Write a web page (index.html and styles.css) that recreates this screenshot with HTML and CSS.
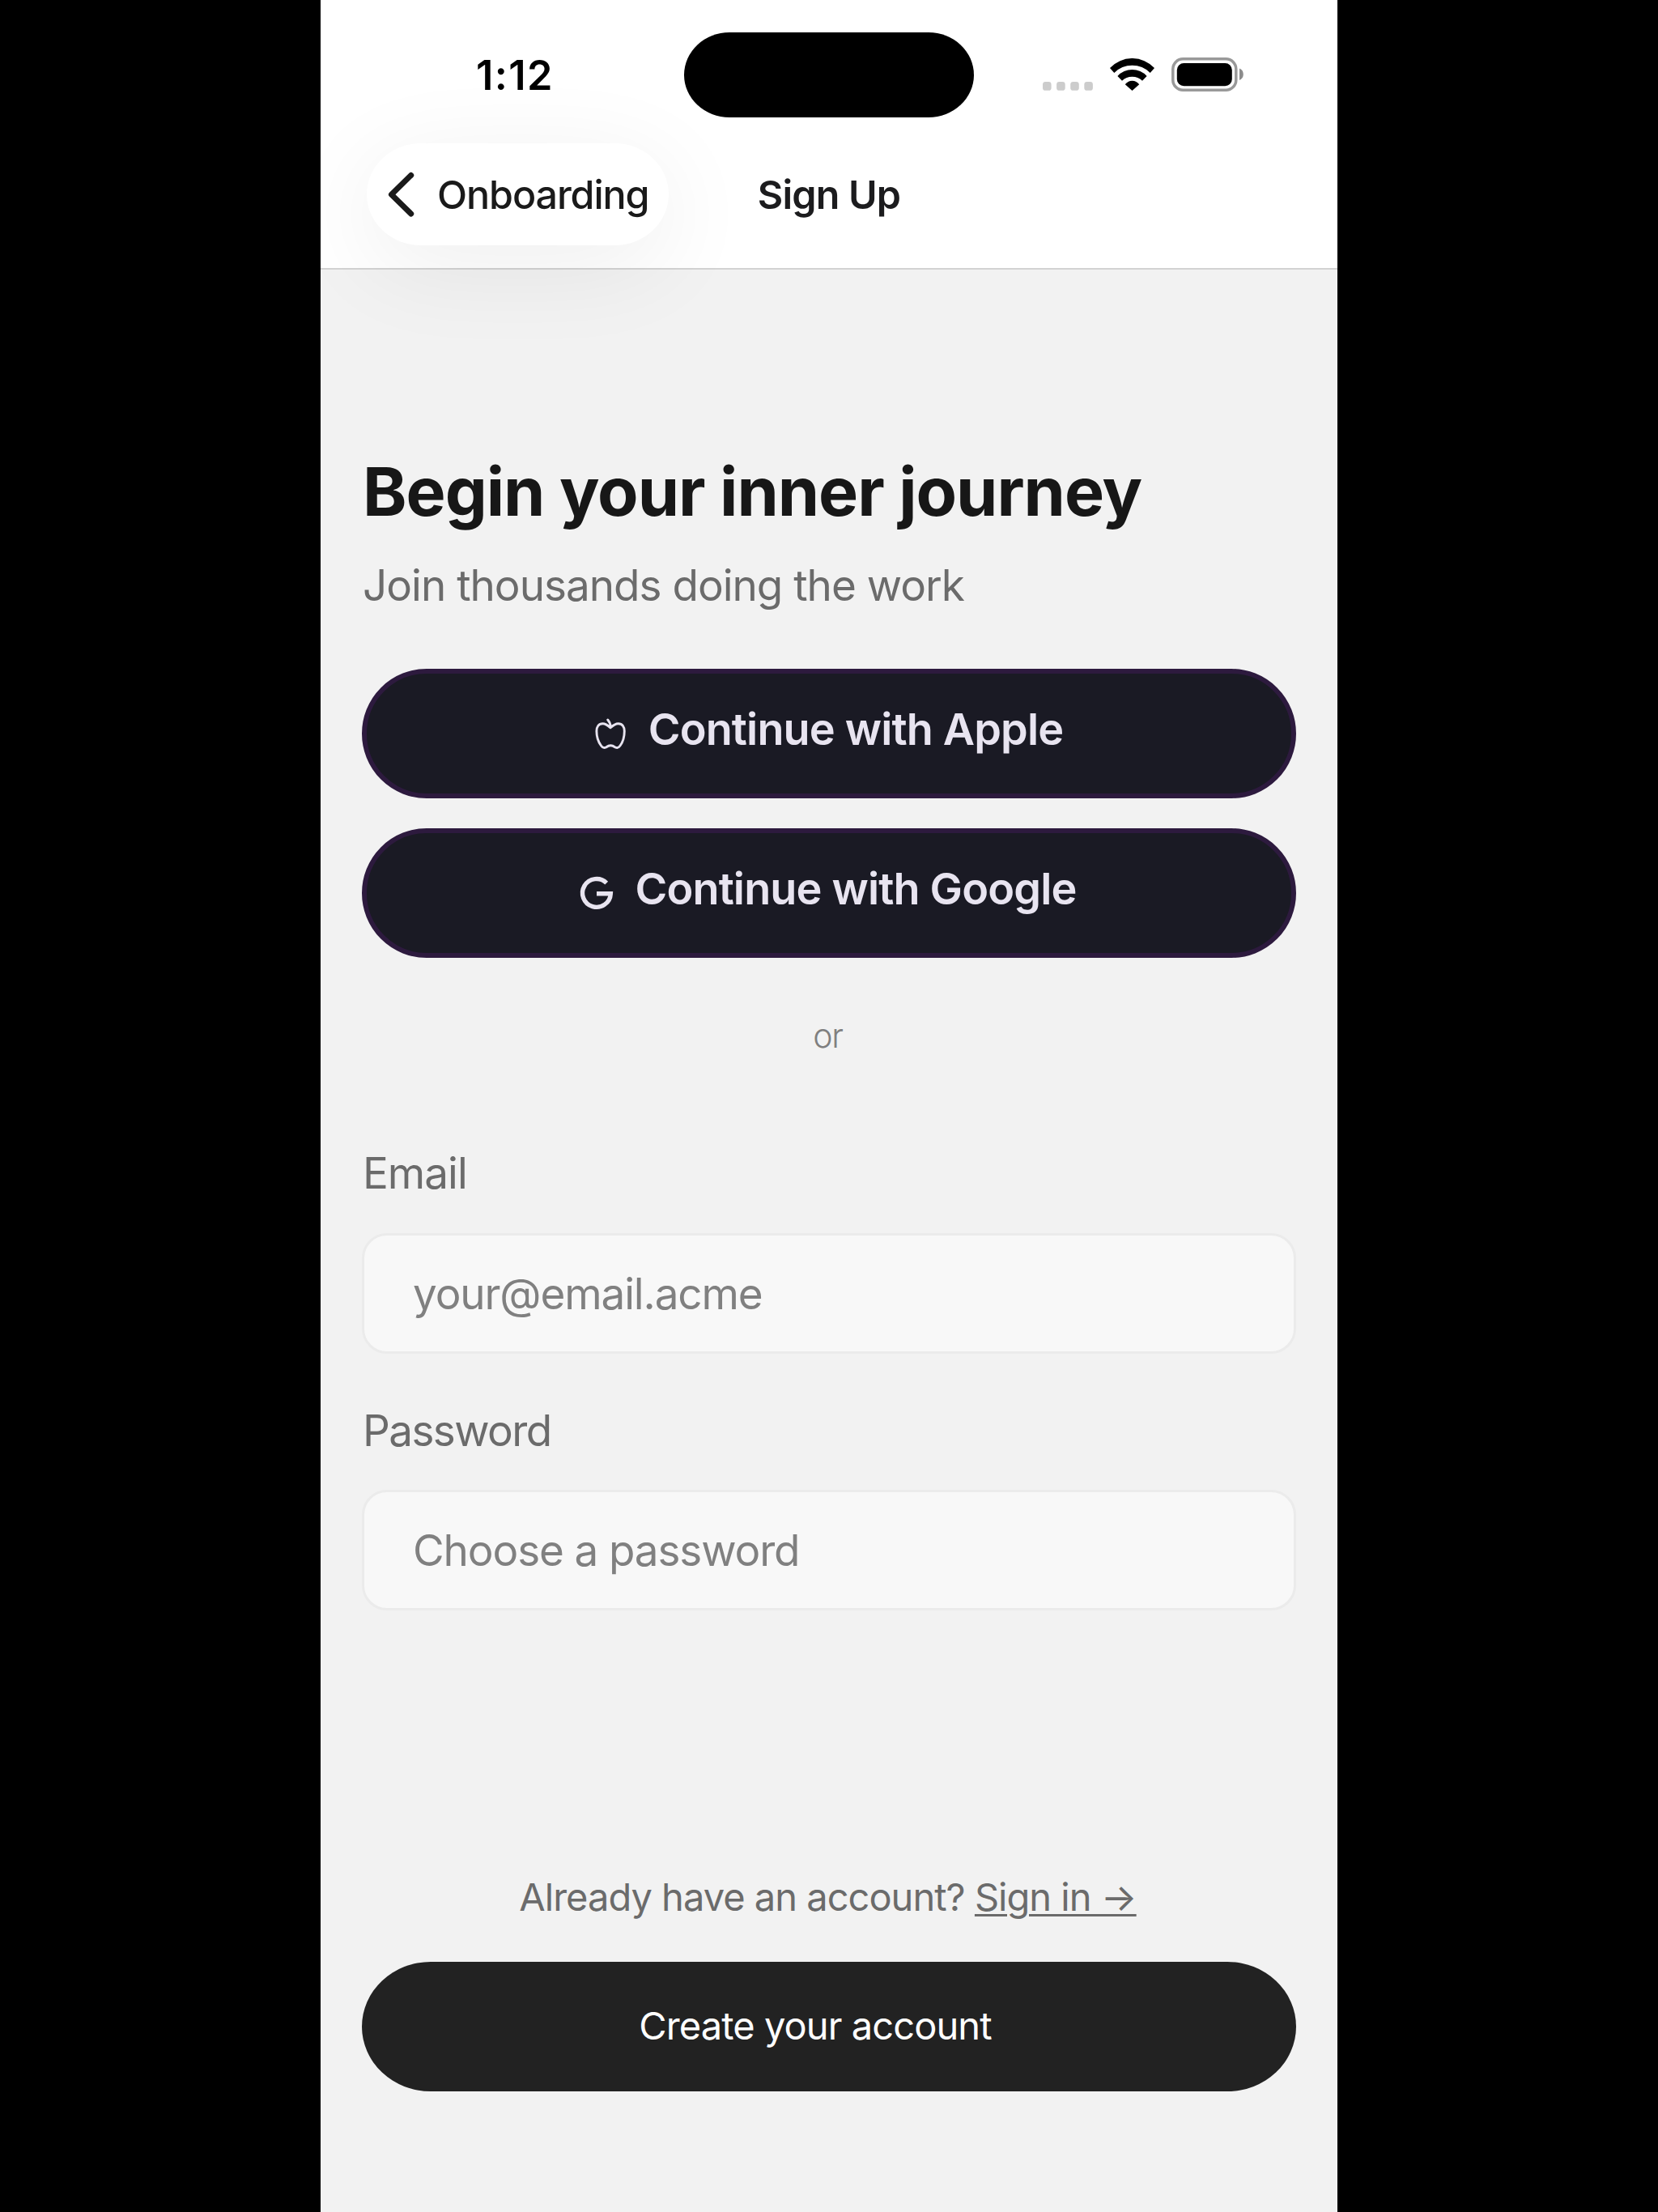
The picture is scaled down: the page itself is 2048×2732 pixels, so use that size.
FILE: index.html
```
<!DOCTYPE html>
<html lang="en">
<head>
<meta charset="utf-8">
<title>Sign Up</title>
<link rel="stylesheet" href="styles.css">
</head>
<body>
<div class="phone">
  <header class="header">
    <div class="status">
      <span class="time">1:12</span>
      <div class="island"></div>
      <div class="indicators">
        <svg class="signal" width="62" height="11" viewBox="0 0 62 11" fill="#cccccc"><rect width="10.6" height="10.8" rx="3.4"/><rect x="17.1" width="10.6" height="10.8" rx="3.4"/><rect x="34.2" width="10.6" height="10.8" rx="3.4"/><rect x="51.3" width="10.6" height="10.8" rx="3.4"/></svg>
        <svg class="wifi" width="55" height="40" viewBox="0 0 55 40" fill="#000"><path d="M0 12A37.5 37.5 0 0 1 55 12L49.7 18A31.1 31.1 0 0 0 5.3 18Z"/><path d="M9.4 22A24.5 24.5 0 0 1 45.6 22L40 27.7A18.1 18.1 0 0 0 15 27.7Z"/><path d="M18.8 32.3A10.5 10.5 0 0 1 36.2 32.3L27.5 40Z"/></svg>
        <svg class="battery" width="90" height="42" viewBox="0 0 90 42"><rect x="1.8" y="1.8" width="78" height="38.4" rx="12.5" fill="none" stroke="#999999" stroke-width="3.5"/><rect x="6.8" y="7" width="68" height="28.2" rx="8.5"/><path d="M84 13.5Q88.8 15.5 88.8 20.8T84 28.1Z" fill="#8c8c8c"/></svg>
      </div>
    </div>
    <nav class="nav">
      <a class="back">
        <svg width="34" height="56" viewBox="0 0 34 56" fill="none" stroke="#1a1a1a" stroke-width="7" stroke-linecap="round" stroke-linejoin="round"><path d="M28.7 4.4 4.5 28.2 28.7 52"/></svg>
        <span>Onboarding</span>
      </a>
      <h2 class="nav-title">Sign Up</h2>
    </nav>
  </header>

  <main class="content">
    <h1 class="heading">Begin your inner journey</h1>
    <p class="subtitle">Join thousands doing the work</p>

    <div class="providers">
      <button class="provider">
        <svg width="48" height="48" viewBox="0 0 48 48" fill="none" stroke="#e8e4f0" stroke-width="2.9" stroke-linecap="round" stroke-linejoin="round"><path d="M24.1 16.8C21 14 18 11.7 14.5 11.7 9.5 11.7 6.9 15.5 6.9 21 6.9 28 9.5 35 12.5 39 14 41.2 16.5 42 18.5 41 20 40 22 38.8 24.3 38.8 26.5 38.8 28.5 40 30 41 32 42 34.5 41.2 36 39 39 35 41.3 28 41.3 21 41.3 15.5 38.7 11.7 33.7 11.7 30.5 11.7 27 14 24.1 16.8V15.5C24.1 12.5 22.5 9 20.7 7"/></svg>
        <span>Continue with Apple</span>
      </button>
      <button class="provider">
        <svg width="48" height="48" viewBox="0 0 48 48" fill="none" stroke="#e8e4f0" stroke-width="5.4"><path d="M36.2 11.6A17.4 17.4 0 1 0 41.3 24.8H24"/></svg>
        <span>Continue with Google</span>
      </button>
    </div>

    <p class="divider">or</p>

    <label class="field">
      <span class="label">Email</span>
      <input class="input" type="email" placeholder="your@email.acme">
    </label>
    <label class="field">
      <span class="label label-password">Password</span>
      <input class="input" type="password" placeholder="Choose a password">
    </label>

    <footer class="footer">
      <p class="signin">Already have an account? <a class="link">Sign in →</a></p>
      <button class="submit">Create your account</button>
    </footer>
  </main>
</div>
</body>
</html>
```
FILE: styles.css
```
* { box-sizing: border-box; margin: 0; }

body {
  background: #000;
  font-family: Inter, "Liberation Sans", sans-serif;
}

button, input { font-family: inherit; border: 0; }
svg { display: block; flex: none; }

.phone {
  width: 1256px;
  height: 2732px;
  margin: 0 auto;
  background: #f2f2f2;
  display: flex;
  flex-direction: column;
  overflow: hidden;
}

.header {
  height: 333px;
  flex: none;
  background: #fff;
  border-bottom: 2px solid #d2d2d2;
}

.status {
  display: grid;
  grid-template-columns: 449px 358px 1fr;
  align-items: center;
  height: 145px;
  padding-top: 40px;
}

.time {
  padding-left: 192px;
  font-size: 50.5px;
  font-weight: 600;
  letter-spacing: 1.4px;
  line-height: 60px;
}

.island {
  height: 105px;
  background: #000;
  border-radius: 56px / 52.5px;
}

.indicators {
  display: flex;
  align-items: center;
  padding-left: 85px;
}

.signal { margin-top: 27px; }
.wifi { margin: -2px 21px 0 21px; }
.battery { margin-top: -1px; }

.nav {
  display: grid;
  grid-template-columns: 1fr auto 1fr;
  align-items: center;
  padding: 32px 57px 0;
}

.back {
  justify-self: start;
  display: flex;
  align-items: center;
  gap: 27px;
  width: 373px;
  height: 126px;
  padding-left: 26px;
  background: #fff;
  border-radius: 67px / 63px;
  box-shadow: 0 24px 120px rgba(0, 0, 0, 0.07);
  color: #1a1a1a;
  font-size: 48.4px;
  font-weight: 500;
  letter-spacing: -1.08px;
}

.nav-title {
  color: #1c1c1e;
  font-size: 48.4px;
  font-weight: 600;
  letter-spacing: -0.8px;
}

.content {
  flex: 1;
  display: flex;
  flex-direction: column;
  padding: 224px 51px 149px;
}

.heading {
  color: #171717;
  font-size: 82.5px;
  font-weight: 700;
  line-height: 100px;
  letter-spacing: -1.03px;
  margin-left: 1px;
}

.subtitle {
  margin: 34px 0 71px 1px;
  color: #6b6b6b;
  font-size: 53px;
  line-height: 64px;
  letter-spacing: -0.99px;
}

.providers {
  display: flex;
  flex-direction: column;
  gap: 37px;
}

.provider {
  display: flex;
  align-items: center;
  justify-content: center;
  gap: 23px;
  height: 160px;
  padding: 0 5px 0 0;
  background: #1a1a24;
  border: 6px solid #2d1a3e;
  border-radius: 80px;
  color: #e8e4f0;
  font-size: 54px;
  font-weight: 600;
  letter-spacing: -0.84px;
}

.provider span { margin-top: -11px; }

.divider {
  margin: 71px 0 113px;
  padding-right: 3px;
  color: #7f7f7f;
  font-size: 41px;
  font-weight: 300;
  line-height: 50px;
  letter-spacing: -1.3px;
  text-align: center;
}

.field {
  display: flex;
  flex-direction: column;
  gap: 42px;
  margin-bottom: 63px;
}

.label {
  padding-left: 1px;
  color: #6b6b6b;
  font-size: 53px;
  line-height: 64px;
  letter-spacing: -1px;
}

.label-password {
  margin-bottom: -1px;
  letter-spacing: -1.6px;
}

.input {
  height: 149px;
  padding: 0 60px;
  background: #f8f8f8;
  border: 3px solid #ebebeb;
  border-radius: 31px;
  font-size: 53px;
  letter-spacing: -1.12px;
}

.input::placeholder { color: #808080; }

.footer { margin-top: auto; }

.signin {
  margin-bottom: 52px;
  padding-right: 3px;
  color: #6b6b6b;
  font-size: 47px;
  line-height: 56px;
  letter-spacing: -0.98px;
  text-align: center;
}

.link {
  text-decoration: underline;
  text-decoration-thickness: 2.7px;
  text-underline-offset: 4px;
}

.submit {
  display: block;
  width: 100%;
  height: 160px;
  padding: 0 34px 3px 0;
  background: #222;
  border-radius: 85px / 80px;
  color: #fff;
  font-size: 47px;
  letter-spacing: -0.91px;
}
```
